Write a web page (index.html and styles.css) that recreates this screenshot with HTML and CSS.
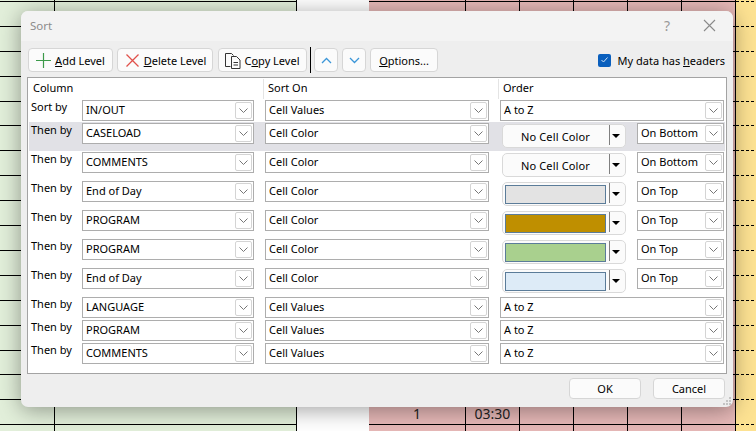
FILE: index.html
```html
<!DOCTYPE html>
<html lang="en">
<head>
    <meta charset="UTF-8">
    <title>Sort</title>
    <link rel="stylesheet" href="styles.css">
</head>
<body>
    <div class="sheet">
        <div class="col green first"></div>
        <div class="col green second"></div>
        <div class="col blank"></div>
        <div class="col pink wide"><span class="cell">1</span></div>
        <div class="col pink"><span class="cell">03:30</span></div>
        <div class="col pink"></div>
        <div class="col pink"></div>
        <div class="col pink"></div>
        <div class="col pink"></div>
        <div class="col yellow"></div>
    </div>

    <div class="dialog">
        <div class="titlebar">
            <span class="title">Sort</span>
            <span class="help">?</span>
            <svg class="close" width="13" height="13" viewBox="0 0 13 13"><path d="M1 1l11 11M12 1L1 12" stroke="#8a8a8a" stroke-width="1.1" fill="none"/></svg>
        </div>

        <div class="toolbar">
            <button class="btn add">
                <svg width="15" height="15" viewBox="0 0 15 15"><path d="M7.5 0v15M0 7.5h15" stroke="#3c9a4a" stroke-width="1.2" fill="none"/></svg>
                <span><u>A</u>dd Level</span>
            </button>
            <button class="btn delete">
                <svg width="13" height="13" viewBox="0 0 13 13"><path d="M.5.5l12 12M12.5.5l-12 12" stroke="#e0504a" stroke-width="1.3" fill="none"/></svg>
                <span><u>D</u>elete Level</span>
            </button>
            <button class="btn copy">
                <svg width="17" height="17" viewBox="0 0 17 17"><path d="M5.500 14.500H.5V1.500h6l2 2" stroke="#333" fill="none"/><path d="M6.500 4.500h5l3.500 3.500v8.500H6.500z" stroke="#333" fill="none"/><path d="M8.500 10.500h4.500M8.500 13h4.500" stroke="#333" fill="none"/></svg>
                <span>C<u>o</u>py Level</span>
            </button>
            <div class="sep"></div>
            <button class="btn arrow">
                <svg width="11" height="7" viewBox="0 0 11 7"><path d="M1 6l4.500-4.500L10 6" stroke="#3b96d8" stroke-width="1.300" fill="none"/></svg>
            </button>
            <button class="btn arrow">
                <svg width="11" height="7" viewBox="0 0 11 7"><path d="M1 1l4.500 4.500L10 1" stroke="#3b96d8" stroke-width="1.300" fill="none"/></svg>
            </button>
            <button class="btn options"><u>O</u>ptions...</button>
            <label class="headers">
                <span class="checkbox">
                    <svg width="7" height="6" viewBox="0 0 7 6"><path d="M.5 3l2 2L6.500.5" stroke="#cfe2f7" fill="none"/></svg>
                </span>
                <span>My data has <u>h</u>eaders</span>
            </label>
        </div>

        <div class="levels">
            <div class="head">
                <div class="head-col first-head">Column</div>
                <div class="head-col">Sort On</div>
                <div class="head-col">Order</div>
            </div>

            <div class="row">
                <div class="by">Sort by</div>
                <div class="combo">IN/OUT<span class="drop"><svg width="9" height="5" viewBox="0 0 9 5"><path d="M.5.500l4 4 4-4" stroke="#777" fill="none"/></svg></span></div>
                <div class="combo">Cell Values<span class="drop"><svg width="9" height="5" viewBox="0 0 9 5"><path d="M.5.500l4 4 4-4" stroke="#777" fill="none"/></svg></span></div>
                <div class="combo">A to Z<span class="drop"><svg width="9" height="5" viewBox="0 0 9 5"><path d="M.5.500l4 4 4-4" stroke="#777" fill="none"/></svg></span></div>
            </div>

            <div class="row tall selected">
                <div class="by">Then by</div>
                <div class="combo">CASELOAD<span class="drop"><svg width="9" height="5" viewBox="0 0 9 5"><path d="M.5.500l4 4 4-4" stroke="#777" fill="none"/></svg></span></div>
                <div class="combo">Cell Color<span class="drop"><svg width="9" height="5" viewBox="0 0 9 5"><path d="M.5.500l4 4 4-4" stroke="#777" fill="none"/></svg></span></div>
                <div class="order">
                    <div class="picker"><span class="nocolor">No Cell Color</span><span class="caret"></span></div>
                    <div class="combo place">On Bottom<span class="drop"><svg width="9" height="5" viewBox="0 0 9 5"><path d="M.5.500l4 4 4-4" stroke="#777" fill="none"/></svg></span></div>
                </div>
            </div>

            <div class="row tall">
                <div class="by">Then by</div>
                <div class="combo">COMMENTS<span class="drop"><svg width="9" height="5" viewBox="0 0 9 5"><path d="M.5.500l4 4 4-4" stroke="#777" fill="none"/></svg></span></div>
                <div class="combo">Cell Color<span class="drop"><svg width="9" height="5" viewBox="0 0 9 5"><path d="M.5.500l4 4 4-4" stroke="#777" fill="none"/></svg></span></div>
                <div class="order">
                    <div class="picker"><span class="nocolor">No Cell Color</span><span class="caret"></span></div>
                    <div class="combo place">On Bottom<span class="drop"><svg width="9" height="5" viewBox="0 0 9 5"><path d="M.5.500l4 4 4-4" stroke="#777" fill="none"/></svg></span></div>
                </div>
            </div>

            <div class="row tall">
                <div class="by">Then by</div>
                <div class="combo">End of Day<span class="drop"><svg width="9" height="5" viewBox="0 0 9 5"><path d="M.5.500l4 4 4-4" stroke="#777" fill="none"/></svg></span></div>
                <div class="combo">Cell Color<span class="drop"><svg width="9" height="5" viewBox="0 0 9 5"><path d="M.5.500l4 4 4-4" stroke="#777" fill="none"/></svg></span></div>
                <div class="order">
                    <div class="picker"><span class="swatch grey"></span><span class="caret"></span></div>
                    <div class="combo place">On Top<span class="drop"><svg width="9" height="5" viewBox="0 0 9 5"><path d="M.5.500l4 4 4-4" stroke="#777" fill="none"/></svg></span></div>
                </div>
            </div>

            <div class="row tall">
                <div class="by">Then by</div>
                <div class="combo">PROGRAM<span class="drop"><svg width="9" height="5" viewBox="0 0 9 5"><path d="M.5.500l4 4 4-4" stroke="#777" fill="none"/></svg></span></div>
                <div class="combo">Cell Color<span class="drop"><svg width="9" height="5" viewBox="0 0 9 5"><path d="M.5.500l4 4 4-4" stroke="#777" fill="none"/></svg></span></div>
                <div class="order">
                    <div class="picker"><span class="swatch gold"></span><span class="caret"></span></div>
                    <div class="combo place">On Top<span class="drop"><svg width="9" height="5" viewBox="0 0 9 5"><path d="M.5.500l4 4 4-4" stroke="#777" fill="none"/></svg></span></div>
                </div>
            </div>

            <div class="row tall">
                <div class="by">Then by</div>
                <div class="combo">PROGRAM<span class="drop"><svg width="9" height="5" viewBox="0 0 9 5"><path d="M.5.500l4 4 4-4" stroke="#777" fill="none"/></svg></span></div>
                <div class="combo">Cell Color<span class="drop"><svg width="9" height="5" viewBox="0 0 9 5"><path d="M.5.500l4 4 4-4" stroke="#777" fill="none"/></svg></span></div>
                <div class="order">
                    <div class="picker"><span class="swatch lime"></span><span class="caret"></span></div>
                    <div class="combo place">On Top<span class="drop"><svg width="9" height="5" viewBox="0 0 9 5"><path d="M.5.500l4 4 4-4" stroke="#777" fill="none"/></svg></span></div>
                </div>
            </div>

            <div class="row tall">
                <div class="by">Then by</div>
                <div class="combo">End of Day<span class="drop"><svg width="9" height="5" viewBox="0 0 9 5"><path d="M.5.500l4 4 4-4" stroke="#777" fill="none"/></svg></span></div>
                <div class="combo">Cell Color<span class="drop"><svg width="9" height="5" viewBox="0 0 9 5"><path d="M.5.500l4 4 4-4" stroke="#777" fill="none"/></svg></span></div>
                <div class="order">
                    <div class="picker"><span class="swatch sky"></span><span class="caret"></span></div>
                    <div class="combo place">On Top<span class="drop"><svg width="9" height="5" viewBox="0 0 9 5"><path d="M.5.500l4 4 4-4" stroke="#777" fill="none"/></svg></span></div>
                </div>
            </div>

            <div class="row">
                <div class="by">Then by</div>
                <div class="combo">LANGUAGE<span class="drop"><svg width="9" height="5" viewBox="0 0 9 5"><path d="M.5.500l4 4 4-4" stroke="#777" fill="none"/></svg></span></div>
                <div class="combo">Cell Values<span class="drop"><svg width="9" height="5" viewBox="0 0 9 5"><path d="M.5.500l4 4 4-4" stroke="#777" fill="none"/></svg></span></div>
                <div class="combo">A to Z<span class="drop"><svg width="9" height="5" viewBox="0 0 9 5"><path d="M.5.500l4 4 4-4" stroke="#777" fill="none"/></svg></span></div>
            </div>

            <div class="row">
                <div class="by">Then by</div>
                <div class="combo">PROGRAM<span class="drop"><svg width="9" height="5" viewBox="0 0 9 5"><path d="M.5.500l4 4 4-4" stroke="#777" fill="none"/></svg></span></div>
                <div class="combo">Cell Values<span class="drop"><svg width="9" height="5" viewBox="0 0 9 5"><path d="M.5.500l4 4 4-4" stroke="#777" fill="none"/></svg></span></div>
                <div class="combo">A to Z<span class="drop"><svg width="9" height="5" viewBox="0 0 9 5"><path d="M.5.500l4 4 4-4" stroke="#777" fill="none"/></svg></span></div>
            </div>

            <div class="row">
                <div class="by">Then by</div>
                <div class="combo">COMMENTS<span class="drop"><svg width="9" height="5" viewBox="0 0 9 5"><path d="M.5.500l4 4 4-4" stroke="#777" fill="none"/></svg></span></div>
                <div class="combo">Cell Values<span class="drop"><svg width="9" height="5" viewBox="0 0 9 5"><path d="M.5.500l4 4 4-4" stroke="#777" fill="none"/></svg></span></div>
                <div class="combo">A to Z<span class="drop"><svg width="9" height="5" viewBox="0 0 9 5"><path d="M.5.500l4 4 4-4" stroke="#777" fill="none"/></svg></span></div>
            </div>
        </div>

        <div class="footer">
            <button class="btn action">OK</button>
            <button class="btn action">Cancel</button>
        </div>

        <svg class="grip" width="10" height="10" viewBox="0 0 10 10" fill="#c4c4c4">
            <rect x="7" y="1" width="2" height="2"/>
            <rect x="4" y="4" width="2" height="2"/>
            <rect x="7" y="4" width="2" height="2"/>
            <rect x="1" y="7" width="2" height="2"/>
            <rect x="4" y="7" width="2" height="2"/>
            <rect x="7" y="7" width="2" height="2"/>
        </svg>
    </div>
</body>
</html>
```

FILE: styles.css
```css
* {
    box-sizing: border-box;
}
html, body {
    margin: 0;
    height: 431px;
    overflow: hidden;
}
body {
    font-family: "Noto Sans", sans-serif;
    font-size: 11px;
    color: #000;
}

/* spreadsheet behind the dialog */
.sheet {
    display: flex;
    height: 431px;
}
.col {
    width: 54px;
    height: 431px;
    flex: none;
    border-right: 1px solid #000;
    text-align: center;
    font-size: 14px;
    color: #222;
    background-image: repeating-linear-gradient(to bottom, #000 0, #000 1px, transparent 1px, transparent 24.9px);
    background-position: 0 1px;
}
.first {
    width: 55px;
}
.second {
    width: 242px;
}
.green {
    background-color: #e2efda;
}
.blank {
    width: 72px;
    background: #fff;
    border-right: 0;
}
.pink {
    background-color: #e6b8b7;
}
.wide {
    width: 97px;
}
.yellow {
    width: 20px;
    background-color: #fde292;
    border-right: 0;
    background-image:
        repeating-linear-gradient(to right, transparent 0, transparent 3px, #fde292 3px, #fde292 5px),
        repeating-linear-gradient(to bottom, #000 0, #000 1px, transparent 1px, transparent 24.9px);
}
.cell {
    display: block;
    padding-top: 404px;
}

/* dialog */
.dialog {
    position: absolute;
    left: 21px;
    top: 11px;
    width: 712px;
    height: 396px;
    background: #eeeeee;
    border-radius: 7px;
    box-shadow: 0 3px 22px rgba(0, 0, 0, 0.38);
    overflow: hidden;
}
.titlebar {
    display: flex;
    align-items: center;
    height: 30px;
    padding: 0 17px 2px 9px;
    background: #f3f3f3;
    color: #8c8c8c;
}
.title {
    flex: 1;
    font-size: 11.5px;
}
.help {
    font-size: 14px;
    margin-right: 33px;
    color: #999;
}
.toolbar {
    display: flex;
    align-items: center;
    height: 36px;
    padding: 2px 0 0 7px;
}
.btn {
    display: flex;
    align-items: center;
    justify-content: center;
    height: 24px;
    padding: 0;
    background: #fbfbfb;
    border: 1px solid #d6d6d6;
    border-radius: 4px;
    font-family: inherit;
    font-size: 11px;
    color: #000;
}
.add {
    width: 85px;
    gap: 4px;
    margin-right: 4px;
}
.delete {
    width: 96px;
    gap: 5px;
    margin-right: 5px;
    padding-left: 2px;
}
.copy {
    width: 89px;
    gap: 2px;
}
.sep {
    width: 1px;
    height: 26px;
    margin: 0 3px;
    background: #000;
}
.arrow {
    width: 24px;
    margin-right: 4px;
}
.options {
    width: 68px;
}
.headers {
    display: flex;
    align-items: center;
    gap: 7px;
    margin-left: auto;
    margin-right: 8px;
}
.checkbox {
    display: flex;
    align-items: center;
    justify-content: center;
    width: 13px;
    height: 13px;
    background: #0a5fbd;
    border-radius: 2px;
}

/* sort levels */
.levels {
    width: 700px;
    height: 297px;
    margin-left: 6px;
    background: #fff;
    border: 1px solid #a3a3a3;
}
.head {
    display: grid;
    grid-template-columns: 235px 235px 1fr;
    height: 21px;
    padding-top: 1px;
}
.head-col {
    height: 20px;
    line-height: 18px;
    padding-left: 4px;
    border-left: 1px solid #e4e4e4;
}
.first-head {
    padding-left: 5px;
    border-left: 0;
}
.row {
    display: grid;
    grid-template-columns: 42px 172px 224px 224px;
    column-gap: 11px;
    align-items: start;
    height: 23px;
    margin: 0 1px;
    padding-top: 1px;
}
.tall {
    height: 29px;
}
.selected {
    background: #e1e1e6;
}
.by {
    padding-left: 2px;
    line-height: 13px;
    white-space: nowrap;
}
.combo {
    display: flex;
    align-items: center;
    justify-content: space-between;
    height: 21px;
    padding: 0 1px 2px 3px;
    background: #fff;
    border: 1px solid #adadad;
}
.drop {
    display: flex;
    align-items: center;
    justify-content: center;
    width: 17px;
    height: 17px;
    margin-bottom: -2px;
    border: 1px solid #d4d4d4;
    border-radius: 2px;
}
.order {
    display: flex;
    justify-content: space-between;
}
.picker {
    display: flex;
    align-items: center;
    width: 124px;
    height: 24px;
    margin: 1px 0 0 2px;
    padding: 0 5px 0 2px;
    background: #fbfbfb;
    border: 1px solid #d9d9d9;
    border-radius: 5px;
}
.nocolor {
    width: 101px;
    text-align: center;
    padding-top: 1px;
    letter-spacing: 0.15px;
}
.swatch {
    width: 101px;
    height: 19px;
    margin-top: 1px;
    border: 1px solid #5b7c99;
}
.grey {
    background: #e3e3e3;
}
.gold {
    background: #bf8f00;
}
.lime {
    background: #a9d08e;
}
.sky {
    background: #ddebf7;
}
.caret {
    position: relative;
    width: 0;
    height: 0;
    margin-left: 6px;
    border-top: 4px solid #000;
    border-left: 4px solid transparent;
    border-right: 4px solid transparent;
}
.caret::before {
    content: "";
    position: absolute;
    left: -7px;
    top: -13px;
    width: 1px;
    height: 20px;
    background: #808080;
}
.place {
    width: 87px;
}
.footer {
    display: flex;
    justify-content: flex-end;
    gap: 12px;
    padding: 4px 8px 0 0;
}
.action {
    width: 72px;
    height: 21px;
}
.grip {
    position: absolute;
    right: 1px;
    bottom: 1px;
}
```
